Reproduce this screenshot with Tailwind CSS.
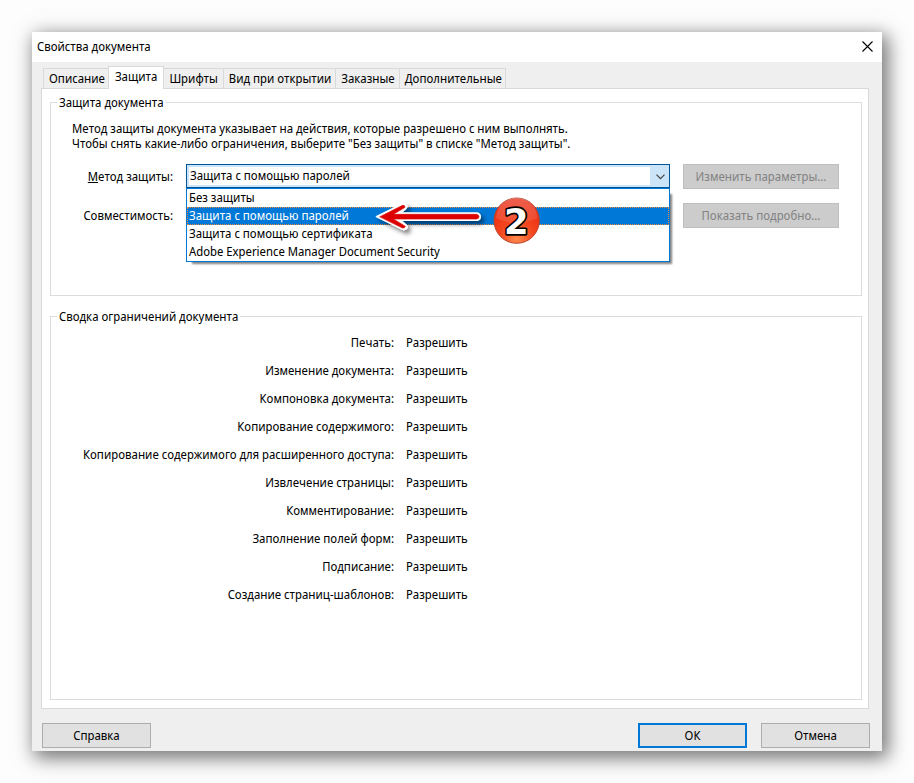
<!DOCTYPE html>
<html lang="ru">
<head>
    <meta charset="UTF-8">
    <meta name="viewport" content="width=device-width, initial-scale=1.0">
    <title>Свойства документа</title>
    <script src="https://cdn.jsdelivr.net/npm/@tailwindcss/browser@4"></script>
</head>
<body class="min-h-screen p-8 flex bg-[#fdfdfd] font-['Noto_Sans_Display','Noto_Sans',sans-serif] text-[12px] leading-[15px] text-black">
    <main class="flex-1 min-w-0 flex flex-col bg-[#efefef] shadow-[4px_5px_18px_2px_rgba(0,0,0,0.55)]">
        <!-- Title bar -->
        <header class="h-[30px] pl-[5px] pr-2 pb-px flex justify-between items-center bg-white">
            <h1>Свойства документа</h1>
            <button type="button" aria-label="Закрыть" class="p-px">
                <svg class="w-[11px] h-[11px]" viewBox="0 0 11 11" fill="none" stroke="#000" stroke-width="1.1">
                    <path d="M0.5 0.5L10.5 10.5M10.5 0.5L0.5 10.5"/>
                </svg>
            </button>
        </header>

        <!-- Tabs -->
        <nav role="tablist" class="h-[26px] pl-[11px] flex items-end">
            <button type="button" role="tab" class="h-5 pl-[5px] pr-[3px] border-t border-l border-[#d9d9d9] whitespace-nowrap">Описание</button>
            <button type="button" role="tab" aria-selected="true" class="relative h-[23px] -mb-px px-[6px] pb-1 border border-b-0 border-[#d9d9d9] bg-white whitespace-nowrap">Защита</button>
            <button type="button" role="tab" class="h-5 pl-[5px] pr-[5px] border-t border-r border-[#d9d9d9] whitespace-nowrap">Шрифты</button>
            <button type="button" role="tab" class="h-5 pl-[5px] pr-1 border-t border-r border-[#d9d9d9] whitespace-nowrap">Вид при открытии</button>
            <button type="button" role="tab" class="h-5 pl-[5px] pr-1 border-t border-r border-[#d9d9d9] whitespace-nowrap">Заказные</button>
            <button type="button" role="tab" class="h-5 pl-[5px] pr-[3px] border-t border-r border-[#d9d9d9] whitespace-nowrap">Дополнительные</button>
        </nav>

        <!-- Tab panel -->
        <section role="tabpanel" class="flex-1 ml-[9px] mr-[13px] pt-[5px] pl-2 pr-[6px] pb-2 flex flex-col gap-3 border border-[#d9d9d9] bg-white">
            <fieldset class="pl-[6px] pr-[22px] pb-[67px] border border-[#dcdcdc]">
                <legend class="px-[2px] leading-[17px]">Защита документа</legend>
                <p class="mt-[10px] ml-[15px]">
                    Метод защиты документа указывает на действия, которые разрешено с ним выполнять.<br>
                    Чтобы снять какие-либо ограничения, выберите "Без защиты" в списке "Метод защиты".
                </p>
                <div class="mt-[13px] grid grid-cols-[116px_1fr_156px] gap-x-[13px] gap-y-[14px]">
                    <label for="method" class="self-center text-right"><u>М</u>етод защиты:</label>
                    <div class="relative h-6 flex border border-[#005499] bg-[#cce4f7] p-[2px] pr-[19px]">
                        <select id="method" class="w-full h-[18px] pl-px pb-px appearance-none bg-white outline-none">
                            <option>Без защиты</option>
                            <option selected>Защита с помощью паролей</option>
                            <option>Защита с помощью сертификата</option>
                            <option>Adobe Experience Manager Document Security</option>
                        </select>
                        <svg class="absolute right-1 top-[9px] w-[9px] h-[6px] pointer-events-none" viewBox="0 0 9 6" fill="none" stroke="#444" stroke-width="1.2">
                            <path d="M0.5 0.7L4.5 4.7L8.5 0.7"/>
                        </svg>

                        <!-- Opened list -->
                        <div class="absolute z-10 top-[23px] -left-px -right-px border border-[#0078d7] bg-white shadow-[4px_4px_2px_-2px_rgba(0,0,0,0.5)]">
                            <ul role="listbox" aria-label="Метод защиты" class="leading-[18px]">
                                <li role="option" class="pl-[2px]">Без защиты</li>
                                <li role="option" aria-selected="true" class="pl-[2px] bg-[#0078d7] text-white outline-1 outline-dotted outline-[#e58a3c] -outline-offset-1">Защита с помощью паролей</li>
                                <li role="option" class="pl-[2px]">Защита с помощью сертификата</li>
                                <li role="option" class="pl-[2px]">Adobe Experience Manager Document Security</li>
                            </ul>
                            <!-- Step marker -->
                            <svg class="absolute left-[183px] -top-1 w-[190px] h-[85px] pointer-events-none" viewBox="0 0 570 255">
                                <defs>
                                    <radialGradient id="ball" cx="0.5" cy="0.9" r="0.85">
                                        <stop offset="0" stop-color="#ff8a4a"/>
                                        <stop offset="0.45" stop-color="#f4461f"/>
                                        <stop offset="1" stop-color="#e8240c"/>
                                    </radialGradient>
                                    <linearGradient id="gloss" x1="0" y1="0" x2="0" y2="1">
                                        <stop offset="0" stop-color="#fff" stop-opacity="0.28"/>
                                        <stop offset="1" stop-color="#fff" stop-opacity="0.08"/>
                                    </linearGradient>
                                    <filter id="shade" x="-20%" y="-40%" width="150%" height="200%">
                                        <feDropShadow dx="9" dy="10" stdDeviation="7" flood-color="#000" flood-opacity="0.5"/>
                                    </filter>
                                </defs>
                                <g filter="url(#shade)" stroke-linecap="round" stroke-linejoin="round">
                                    <path d="M19 95L98 56Q110 54 111 66Q109 72 90 84H322Q331 87 331 95Q331 103 322 106H90Q110 119 112 125Q110 136 98 133Z" fill="#fff" stroke="#fff" stroke-width="4"/>
                                    <path d="M30 95L98 61Q105 60 105 67L70 88H320Q327 90 327 95Q327 100 320 102H70L106 124Q105 130 98 129Z" fill="#dc0000" stroke="#dc0000" stroke-width="2"/>
                                </g>
                                <circle cx="440" cy="107" r="68" fill="url(#ball)" stroke="#b8452e" stroke-width="3"/>
                                <path d="M378 100A62 62 0 0 1 502 100Q440 128 378 100Z" fill="url(#gloss)"/>
                                <text x="439" y="148" text-anchor="middle" font-family="DejaVu Sans" font-weight="700" font-size="106" fill="#fff" stroke="#000" stroke-width="10" stroke-linejoin="round" paint-order="stroke">2</text>
                            </svg>
                        </div>
                    </div>
                    <button type="button" disabled class="h-[25px] border border-[#bfbfbf] bg-[#cccccc] text-[#838383]">Изменить параметры...</button>
                    <span class="self-center text-right">Совместимость:</span>
                    <button type="button" disabled class="col-start-3 h-[25px] border border-[#bfbfbf] bg-[#cccccc] text-[#838383]">Показать подробно...</button>
                </div>
            </fieldset>

            <fieldset class="flex-1 px-[6px] border border-[#dcdcdc]">
                <legend class="px-[2px] leading-[17px]">Сводка ограничений документа</legend>
                <table class="mt-[3px]">
                    <tbody>
                        <tr class="h-7"><th scope="row" class="w-[337px] font-normal text-right">Печать:</th><td class="pl-3">Разрешить</td></tr>
                        <tr class="h-7"><th scope="row" class="font-normal text-right">Изменение документа:</th><td class="pl-3">Разрешить</td></tr>
                        <tr class="h-7"><th scope="row" class="font-normal text-right">Компоновка документа:</th><td class="pl-3">Разрешить</td></tr>
                        <tr class="h-7"><th scope="row" class="font-normal text-right">Копирование содержимого:</th><td class="pl-3">Разрешить</td></tr>
                        <tr class="h-7"><th scope="row" class="font-normal text-right">Копирование содержимого для расширенного доступа:</th><td class="pl-3">Разрешить</td></tr>
                        <tr class="h-7"><th scope="row" class="font-normal text-right">Извлечение страницы:</th><td class="pl-3">Разрешить</td></tr>
                        <tr class="h-7"><th scope="row" class="font-normal text-right">Комментирование:</th><td class="pl-3">Разрешить</td></tr>
                        <tr class="h-7"><th scope="row" class="font-normal text-right">Заполнение полей форм:</th><td class="pl-3">Разрешить</td></tr>
                        <tr class="h-7"><th scope="row" class="font-normal text-right">Подписание:</th><td class="pl-3">Разрешить</td></tr>
                        <tr class="h-7"><th scope="row" class="font-normal text-right">Создание страниц-шаблонов:</th><td class="pl-3">Разрешить</td></tr>
                    </tbody>
                </table>
            </fieldset>
        </section>

        <!-- Dialog buttons -->
        <footer class="pt-[14px] pb-[3px] pl-[10px] pr-3 flex gap-[14px]">
            <button type="button" class="w-[109px] h-[25px] mr-auto border border-[#adadad] bg-[#e1e1e1]">Справка</button>
            <button type="submit" class="w-[109px] h-[25px] border-2 border-[#0078d7] bg-[#e1e1e1]">ОК</button>
            <button type="button" class="w-[109px] h-[25px] border border-[#adadad] bg-[#e1e1e1]">Отмена</button>
        </footer>
    </main>
</body>
</html>
